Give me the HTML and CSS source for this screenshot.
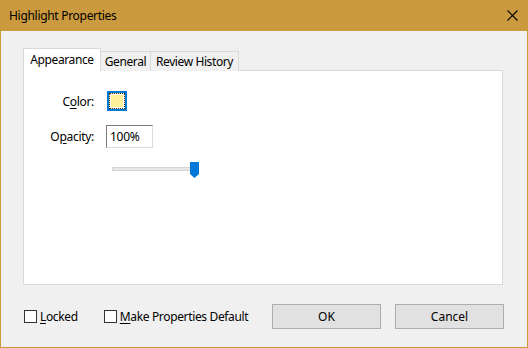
FILE: index.html
```html
<!DOCTYPE html>
<html lang="en">
<head>
    <meta charset="UTF-8">
    <title>Highlight Properties</title>
    <link rel="stylesheet" href="styles.css">
</head>
<body>
    <div class="window">
        <div class="titlebar">
            <span class="title">Highlight Properties</span>
            <svg class="close" width="11" height="11" viewBox="0 0 11 11">
                <path d="M0.5 0.5 L10.5 10.5 M10.5 0.5 L0.5 10.5" stroke="#000" stroke-width="1.1" fill="none"/>
            </svg>
        </div>

        <div class="content">
            <div class="tabs">
                <div class="tab tab-appearance active">Appearance</div>
                <div class="tab tab-general">General</div>
                <div class="tab tab-history">Review History</div>
            </div>

            <div class="panel">
                <div class="form">
                    <label class="label">C<u>o</u>lor:</label>
                    <div class="swatch"><span class="swatch-fill"></span></div>

                    <label class="label">O<u>p</u>acity:</label>
                    <input class="opacity" type="text" value="100%">

                    <span></span>
                    <div class="slider">
                        <div class="track"></div>
                        <svg class="thumb" width="9" height="16" viewBox="0 0 9 16">
                            <path d="M0 0 H9 V12 L4.5 16 L0 12 Z" fill="#0078d7"/>
                        </svg>
                    </div>
                </div>
            </div>

            <div class="footer">
                <label class="check check-locked"><span class="box"></span><span><u>L</u>ocked</span></label>
                <label class="check"><span class="box"></span><span><u>M</u>ake Properties Default</span></label>
                <div class="buttons">
                    <button class="btn">OK</button>
                    <button class="btn">Cancel</button>
                </div>
            </div>
        </div>
    </div>
</body>
</html>
```

FILE: styles.css
```css
body {
    margin: 0;
    font-family: "Noto Sans", "Open Sans", sans-serif;
    font-size: 12px;
    color: #000;
}
.window {
    width: 528px;
    height: 348px;
    box-sizing: border-box;
    background-color: #f0f0f0;
    border: 1px solid #cb9a3e;
    border-top: none;
    display: flex;
    flex-direction: column;
}
.titlebar {
    height: 31px;
    margin: 0 -1px;
    background-color: #cb9a3e;
    display: flex;
    align-items: center;
    justify-content: space-between;
    padding: 0 10px 0 9px;
    flex-shrink: 0;
}
.title {
    font-size: 12px;
    color: #000;
    letter-spacing: -0.3px;
}
.close {
    display: block;
}
.content {
    padding: 17px 24px 0 22px;
}
.tabs {
    display: flex;
    align-items: flex-end;
    height: 23px;
    position: relative;
    z-index: 1;
}
.tab {
    height: 20px;
    box-sizing: border-box;
    border: 1px solid #d9d9d9;
    border-left: none;
    border-bottom: none;
    background-color: #f0f0f0;
    line-height: 19px;
    text-align: center;
    letter-spacing: -0.4px;
    white-space: nowrap;
}
.tab-appearance {
    width: 78px;
}
.tab-general {
    width: 50px;
}
.tab-history {
    width: 88px;
}
.tab.active {
    height: 23px;
    background-color: #fff;
    border-left: 1px solid #d9d9d9;
    line-height: 22px;
}
.panel {
    height: 215px;
    box-sizing: border-box;
    margin-top: -1px;
    background-color: #fff;
    border: 1px solid #d9d9d9;
    padding: 20px 0 0 0;
}
.form {
    display: grid;
    grid-template-columns: 70px auto;
    column-gap: 12px;
    row-gap: 14px;
    align-items: center;
    justify-items: start;
}
.label {
    justify-self: end;
    letter-spacing: -0.3px;
}
.label u,
.check u {
    text-decoration-thickness: 1px;
    text-underline-offset: 2px;
}
.swatch {
    width: 20px;
    height: 20px;
    box-sizing: border-box;
    background-color: #0078d7;
    padding: 2px;
    margin-left: 1px;
}
.swatch-fill {
    display: block;
    width: 100%;
    height: 100%;
    box-sizing: border-box;
    border: 1px dotted #333;
    background-color: #fff29a;
    outline: 1px solid #fff;
    outline-offset: -2px;
}
.opacity {
    width: 47px;
    height: 23px;
    box-sizing: border-box;
    margin: 0;
    padding: 0 0 0 3px;
    border: 1px solid #7a7a7a;
    border-right-color: #dcdcdc;
    border-bottom-color: #dcdcdc;
    font-family: inherit;
    font-size: 12px;
    letter-spacing: -0.3px;
}
.slider {
    position: relative;
    width: 88px;
    height: 16px;
    margin-left: 6px;
}
.track {
    position: absolute;
    left: 0;
    top: 5px;
    width: 80px;
    height: 4px;
    box-sizing: border-box;
    background-color: #e7e7e7;
    border: 1px solid #d6d6d6;
}
.thumb {
    position: absolute;
    left: 78px;
    top: 0;
}
.footer {
    display: flex;
    align-items: center;
    margin-top: 19px;
    padding-left: 1px;
}
.check {
    display: flex;
    align-items: center;
    gap: 3px;
    letter-spacing: -0.35px;
    white-space: nowrap;
}
.check-locked {
    margin-right: 26px;
}
.box {
    width: 13px;
    height: 13px;
    box-sizing: border-box;
    border: 1px solid #333;
    background-color: #fff;
}
.buttons {
    margin-left: auto;
    display: flex;
    gap: 14px;
    margin-right: -1px;
}
.btn {
    width: 109px;
    height: 25px;
    box-sizing: border-box;
    background-color: #e1e1e1;
    border: 1px solid #adadad;
    font-family: inherit;
    font-size: 12px;
    color: #000;
    padding: 0;
}
```
